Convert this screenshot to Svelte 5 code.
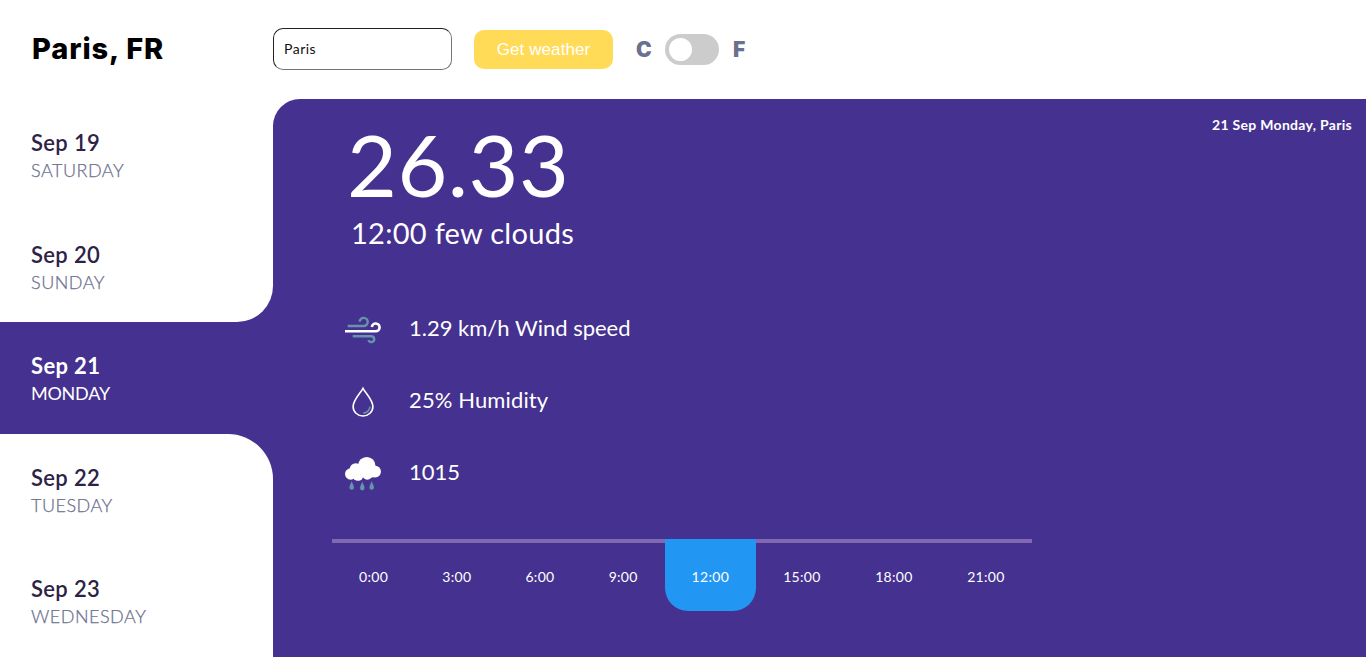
<script>
  let city = $state('Paris');
  let fahrenheit = $state(false);

  const days = [
    { date: 'Sep 19', name: 'SATURDAY' },
    { date: 'Sep 20', name: 'SUNDAY' },
    { date: 'Sep 21', name: 'MONDAY' },
    { date: 'Sep 22', name: 'TUESDAY' },
    { date: 'Sep 23', name: 'WEDNESDAY' }
  ];
  const hours = ['0:00', '3:00', '6:00', '9:00', '12:00', '15:00', '18:00', '21:00'];
  let selectedDay = $state(2);
  let selectedHour = $state(4);
</script>

<div class="app">
  <header>
    <h1>Paris, FR</h1>
    <input class="city" bind:value={city} />
    <button class="submit">Get weather</button>
    <span class="unit c">C</span>
    <button class="switch" class:on={fahrenheit} aria-label="Units" onclick={() => (fahrenheit = !fahrenheit)}><i></i></button>
    <span class="unit f">F</span>
  </header>

  <div class="body">
    <nav>
      {#each days as day, i}
        <button
          class="day"
          class:active={i === selectedDay}
          class:before={i === selectedDay - 1}
          class:after={i === selectedDay + 1}
          onclick={() => (selectedDay = i)}
        >
          <span class="date">{day.date}</span>
          <span class="name">{day.name}</span>
        </button>
      {/each}
    </nav>

    <main>
      <div class="stamp">21 Sep Monday, Paris</div>
      <div class="temp">26.33</div>
      <div class="summary">12:00 few clouds</div>

      <ul class="facts">
        <li>
          <svg width="36" height="36" viewBox="0 0 36 36" fill="none" stroke-width="2.4">
            <path d="M2.7 14H18.7A4.05 4.05 0 1 0 14.6 9.6" stroke="#6793ac" />
            <path d="M0 19.3H30.8A3.9 3.9 0 1 0 26.8 15" stroke="#fff" stroke-width="2.6" />
            <path d="M7.7 24.3H26.3A2.9 2.9 0 1 1 23.5 28" stroke="#6793ac" />
          </svg>
          <span>1.29 km/h Wind speed</span>
        </li>
        <li>
          <svg width="36" height="36" viewBox="0 0 36 36" fill="none">
            <path d="M18 4.300C15.500 9 8.100 16 8.100 22.600A9.900 9.400 0 0 0 27.900 22.600C27.900 16 20.500 9 18 4.300Z" stroke="#fff" stroke-width="1.6" />
            <path d="M25 22.500C24.600 26 22 28.700 18.300 29.200" stroke="#6793ac" stroke-width="1.700" />
          </svg>
          <span class="humidity">25% Humidity</span>
        </li>
        <li>
          <svg width="36" height="36" viewBox="0 0 36 36">
            <g fill="#fff">
              <circle cx="5.700" cy="18" r="5.700" />
              <circle cx="10.800" cy="13.500" r="6.200" />
              <circle cx="21.700" cy="9.800" r="8.800" />
              <circle cx="30.200" cy="15.600" r="5.800" />
              <circle cx="13" cy="19.300" r="5.500" />
              <circle cx="22.300" cy="18.300" r="5.400" />
              <circle cx="27" cy="17" r="4.500" />
            </g>
            <g fill="#6793ac">
              <path d="M6.700 25C7.200 27.500 9 29.300 9 31.500A2.300 2.300 0 0 1 4.400 31.500C4.400 29.300 6.200 27.500 6.700 25Z" />
              <path d="M17.300 25.600C17.800 28.100 19.600 29.900 19.600 32.100A2.300 2.300 0 0 1 15 32.100C15 29.900 16.800 28.100 17.300 25.600Z" />
              <path d="M26.700 25C27.200 27.500 29 29.300 29 31.500A2.300 2.300 0 0 1 24.400 31.500C24.400 29.300 26.200 27.500 26.700 25Z" />
            </g>
          </svg>
          <span>1015</span>
        </li>
      </ul>

      <div class="hours">
        {#each hours as hour, i}
          <button class:active={i === selectedHour} onclick={() => (selectedHour = i)}>{hour}</button>
        {/each}
      </div>
    </main>
  </div>
</div>

<style>
  :global(body) { margin: 0; overflow: hidden; }
  .app {
    height: 657px;
    display: flex;
    flex-direction: column;
    background: #fff;
    font-family: Lato, "Open Sans", sans-serif;
  }
  button { border: 0; padding: 0; margin: 0; background: none; font: inherit; color: inherit; }
  header { height: 99px; display: flex; align-items: center; flex: none; }
  h1 { box-sizing: border-box; width: 273px; height: 42px; padding-left: 32px; margin: 0; font: 800 29px/40px Inter, sans-serif; letter-spacing: .9px; color: #000; white-space: nowrap; }
  .city {
    box-sizing: border-box;
    width: 179px;
    height: 42px;
    margin: 0 0 2px;
    padding: 0 10px;
    border: 1px solid #767676;
    border-top-color: #222;
    border-left-color: #222;
    border-radius: 10px;
    font: 14px Lato, sans-serif;
    color: #111;
    letter-spacing: .5px;
    outline: none;
  }
  .submit {
    width: 139px;
    height: 39px;
    margin-left: 22px;
    border-radius: 10px;
    background: #ffdb58;
    color: #fff;
    font: 17px "Liberation Sans", Arial, sans-serif;
    letter-spacing: .1px;
  }
  .unit { font: 900 21px/24px Inter, sans-serif; color: #6b708d; }
  .c { width: 16px; margin-left: 23px; }
  .f { margin-left: 14px; }
  .switch { width: 54px; height: 31px; margin-left: 13px; padding-left: 4px; border-radius: 16px; background: #ccc; }
  .switch i { display: block; width: 23px; height: 23px; border-radius: 50%; background: #fff; }
  .switch.on { background: #2196f3; padding-left: 27px; }

  .body { flex: 1; display: flex; min-height: 0; background: linear-gradient(90deg, #fff 310px, #45318f 310px); }
  nav { width: 273px; display: grid; grid-template-rows: repeat(5, 1fr); background: linear-gradient(#fff 130px, #45318f 130px, #45318f 400px, #fff 400px); }
  .day {
    display: flex;
    flex-direction: column;
    align-items: flex-start;
    padding: 30px 0 0 31px;
    background: #fff;
    text-align: left;
    white-space: nowrap;
  }
  .date { font-size: 22px; line-height: 28px; font-weight: 600; letter-spacing: .35px; color: #2c2346; }
  .name { font-size: 18px; line-height: 27px; font-weight: 300; letter-spacing: .5px; color: #6b708d; -webkit-text-stroke: .25px #6b708d; }
  .day.active { background: #45318f; }
  .active .date { color: #fff; font-weight: 700; }
  .active .name { color: #fff; font-weight: 400; letter-spacing: -.25px; -webkit-text-stroke: 0; }
  .before { border-bottom-right-radius: 36px; }
  .after { border-top-right-radius: 45px; }

  main { flex: 1; display: flex; flex-direction: column; background: #45318f; border-top-left-radius: 27px; color: #fff; white-space: nowrap; }
  .stamp { height: 19px; padding: 14px 14px 0 0; text-align: right; font-size: 14px; line-height: 24px; font-weight: 700; letter-spacing: .3px; }
  .temp { height: 83px; padding-left: 74px; font-size: 86px; line-height: 64px; letter-spacing: .5px; }
  .summary { height: 97px; padding-left: 78px; font-size: 29px; line-height: 36px; letter-spacing: .28px; }
  .facts { list-style: none; margin: 0; padding: 0 0 0 72px; height: 216px; }
  .facts li { height: 72px; display: flex; align-items: flex-start; gap: 28px; font-size: 22px; line-height: 32px; }
  .humidity { letter-spacing: .12px; }
  .hours { width: 700px; height: 72px; margin: auto 0 46px 59px; display: grid; grid-template-columns: repeat(4, 83.2px) 91.2px repeat(3, 92px); font-size: 14px; letter-spacing: .3px; }
  .hours button { border-top: 4.500px solid #8069b2; padding-bottom: 1px; letter-spacing: inherit; }
  .hours .active { background: #2196f3; border-top-color: #2196f3; border-radius: 0 0 23px 23px; }
</style>
